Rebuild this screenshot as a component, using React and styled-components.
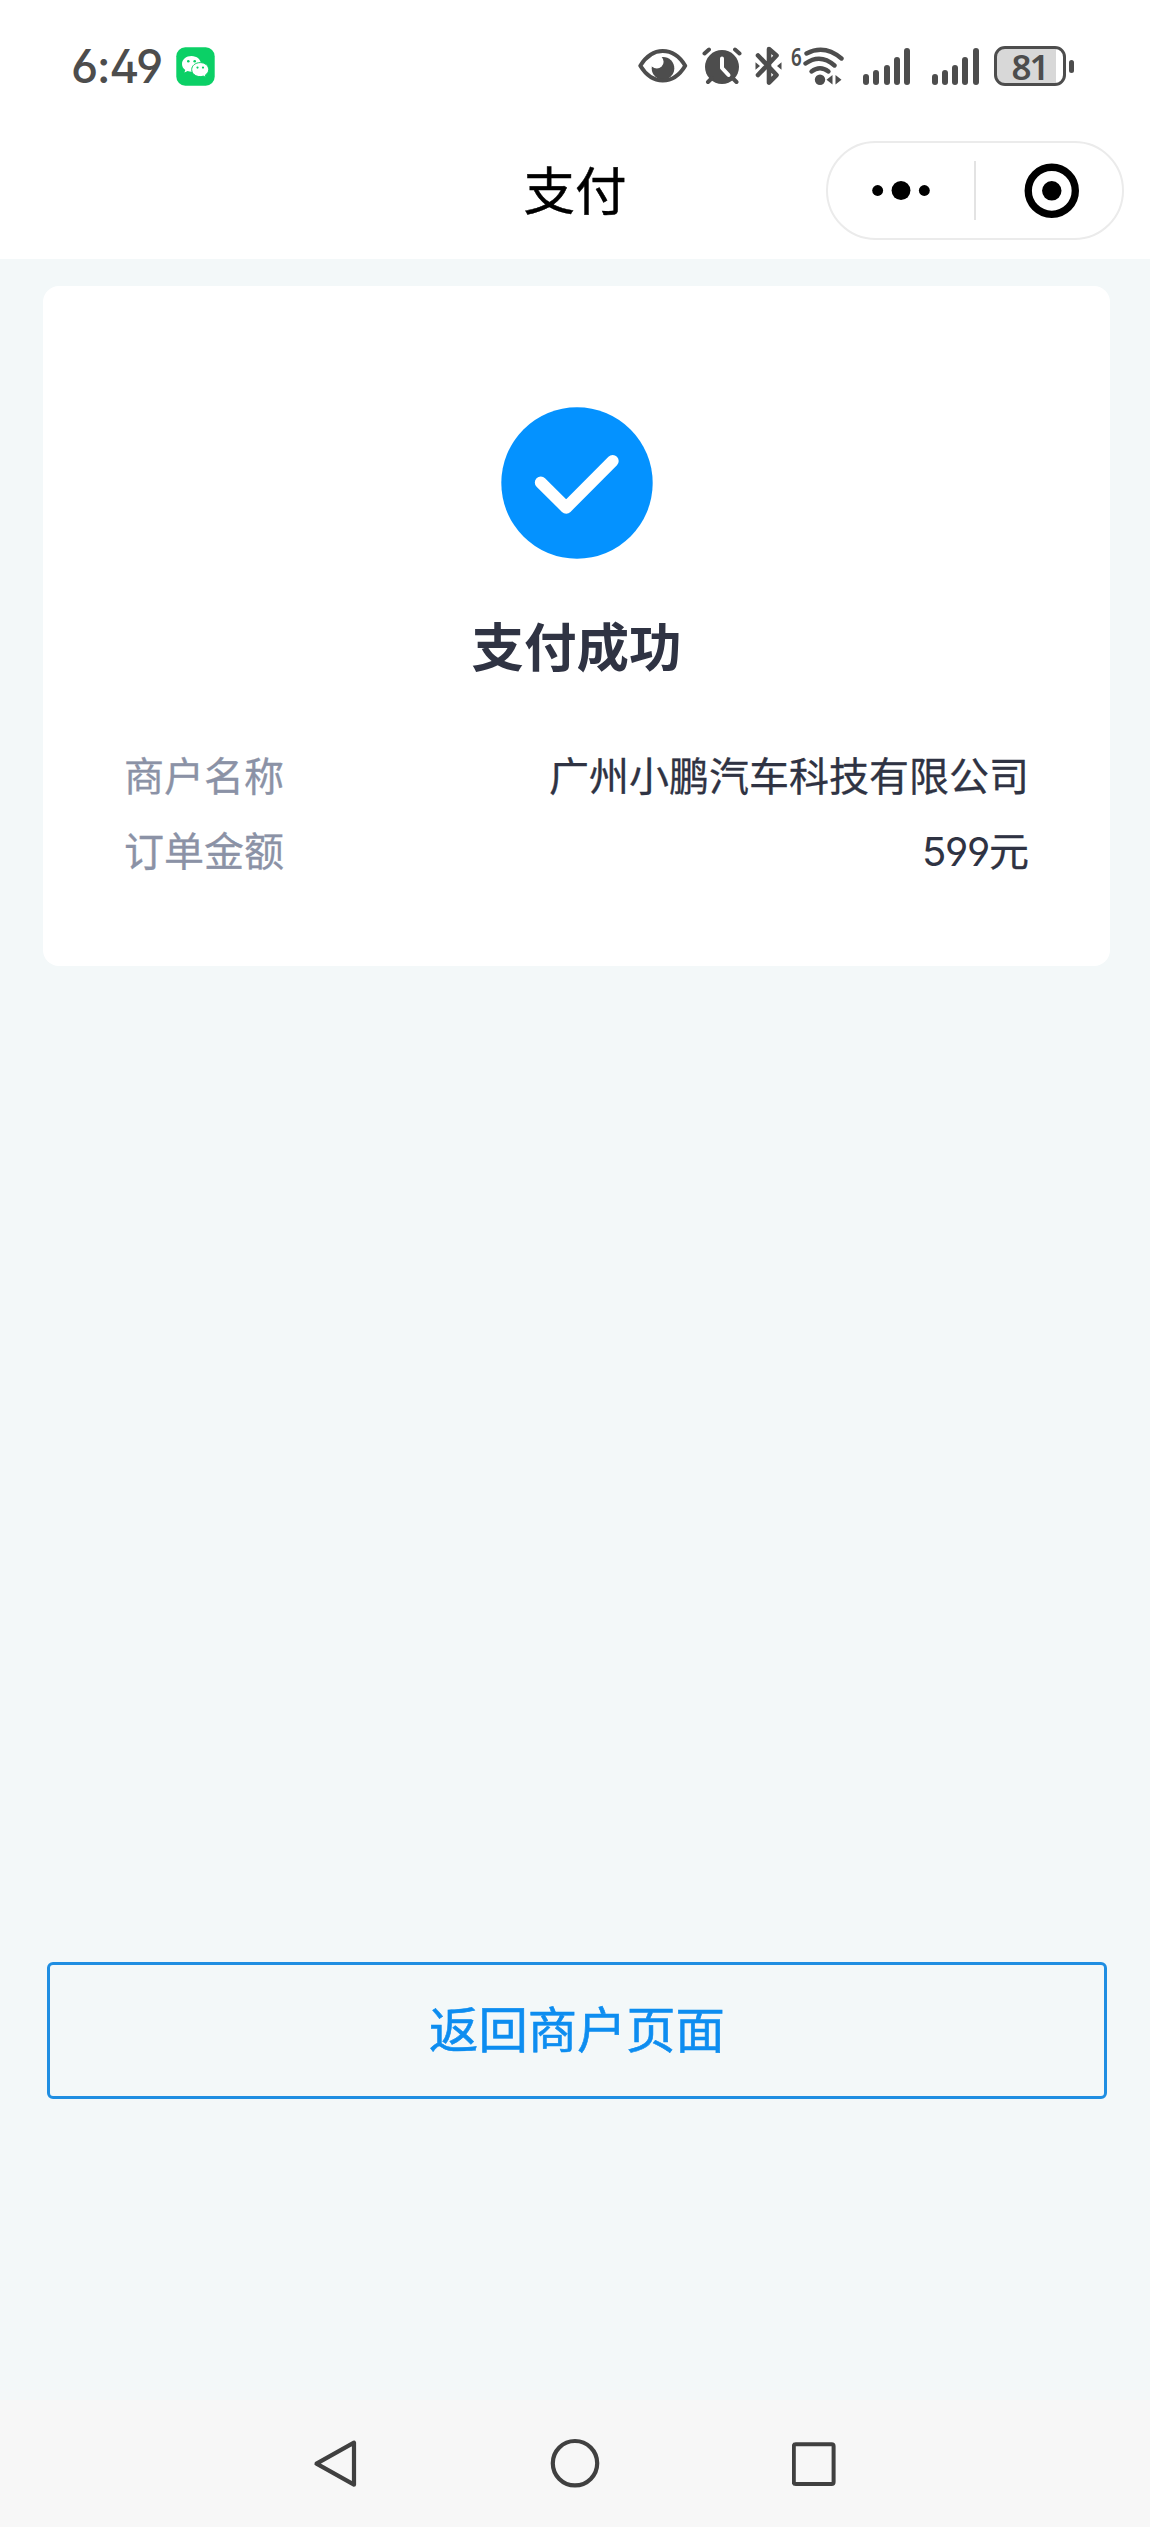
import React from 'react'
import styled, {createGlobalStyle} from 'styled-components'


const GlobalStyle = createGlobalStyle`
    body{
        margin: 0;
        background: #f3f8f9;
        font-family: 'Noto Sans CJK SC', sans-serif;
    }
    *{
        box-sizing: border-box;
    }
`;

const order = [
    {label: '商户名称', value: '广州小鹏汽车科技有限公司'},
    {label: '订单金额', amount: '599', value: '元'},
]

const bars = [11, 15, 20, 28, 37]

const WeChatIcon = () => (
    <Icon width="39" height="39" viewBox="0 0 39 39" $left={14}>
        <rect x="0.3" y="0.3" width="38.4" height="38.4" rx="9" fill="#0bd066"/>
        <path d="M15.5 9C10.200 9 6 12.500 6 17c0 2.500 1.300 4.500 3.300 6l-.9 2.600 3.200-1.500c1.200.4 2.500.7 3.900.7 5.300 0 9.500-3.400 9.500-7.800S20.800 9 15.500 9Z" fill="#fff"/>
        <path d="M24.200 15.600c-4.800 0-8.500 3.100-8.500 7s3.700 7 8.500 7c1.100 0 2.200-.2 3.100-.5l2.700 1.400-.7-2.400c2-1.300 3.400-3.300 3.400-5.500 0-3.900-3.700-7-8.500-7Z" fill="#fff" stroke="#0bd066" strokeWidth="1"/>
        <g fill="#0bd066">
            <circle cx="12.300" cy="14.200" r="1.300"/>
            <circle cx="18.700" cy="14.200" r="1.300"/>
            <circle cx="21.500" cy="20.600" r="1.100"/>
            <circle cx="27" cy="20.600" r="1.100"/>
        </g>
    </Icon>
)

const EyeIcon = () => (
    <Icon width="50" height="40" viewBox="638 46 50 40">
        <circle cx="663" cy="68.200" r="11.300" fill="#4d4d4d"/>
        <circle cx="656.800" cy="61.700" r="6.800" fill="#fff"/>
        <path d="M640.300 65.700C646 56.500 653 51 662.700 51s17 5.500 22.500 14.700C679.700 75 672.500 80.500 662.700 80.500S646 75 640.300 65.700Z" fill="none" stroke="#4d4d4d" strokeWidth="4" strokeLinejoin="round"/>
    </Icon>
)

const AlarmIcon = () => (
    <Icon width="40" height="40" viewBox="702 46 40 40" $left={14}>
        <circle cx="722" cy="67" r="17" fill="#4d4d4d"/>
        <g fill="none" stroke="#4d4d4d" strokeWidth="4" strokeLinecap="round">
            <path d="M704.500 53.500l4.500-4M739.500 53.500l-4.500-4M708 82l4-4M736.500 82l-4-4"/>
        </g>
        <path d="M722 58.500v9.500l6.500 7" fill="none" stroke="#fff" strokeWidth="4" strokeLinecap="round" strokeLinejoin="round"/>
    </Icon>
)

const BluetoothIcon = () => (
    <Icon width="28" height="40" viewBox="755 46 28 40" $left={13}>
        <path d="M758 55.500l18.500 19.500-7.500 7.500v-33.500l7.500 6.500-18.500 19.500" fill="none" stroke="#4d4d4d" strokeWidth="4.600" strokeLinejoin="round" strokeLinecap="round"/>
        <path d="M755.500 62.300l4.500 3.700-4.500 3.700ZM781.500 62.300l-4.500 3.700 4.500 3.700Z" fill="#4d4d4d"/>
    </Icon>
)

const WifiIcon = () => (
    <Icon width="42" height="40" viewBox="803 46 42 40">
        <g fill="none" stroke="#4d4d4d" strokeWidth="4.400" strokeLinecap="round">
            <path d="M806.500 53.500q18-9.500 35 5"/>
            <path d="M805.500 63.500q15-10.500 29 2" />
            <path d="M811.500 71.500q8.500-6.500 17 0"/>
        </g>
        <circle cx="820" cy="79.700" r="5.200" fill="#4d4d4d"/>
        <path d="M832.500 75v9.500l-6-4.700ZM835.500 75v9.500l6-4.700Z" fill="#4d4d4d"/>
    </Icon>
)

const CheckIcon = () => (
    <svg width="152" height="152" viewBox="0 0 152 152">
        <circle cx="76" cy="76" r="75.700" fill="#0492ff"/>
        <path d="M39.800 75.500l25.400 25.200 46.500-46.700" fill="none" stroke="#fff" strokeWidth="12" strokeLinecap="round" strokeLinejoin="round"/>
    </svg>
)

const Signal = ({left}) => (
    <SignalBars $left={left}>
        {bars.map(height => <Bar key={height} $height={height}/>)}
    </SignalBars>
)

const StatusBar = () => (
    <Status>
        <Time>6:49</Time>
        <WeChatIcon/>
        <StatusIcons>
            <EyeIcon/>
            <AlarmIcon/>
            <BluetoothIcon/>
            <WifiLevel>6</WifiLevel>
            <WifiIcon/>
            <Signal left={18}/>
            <Signal left={21.5}/>
            <Battery>81</Battery>
            <BatteryTip/>
        </StatusIcons>
    </Status>
)

const Header = () => (
    <TitleBar>
        <Title>支付</Title>
        <Capsule>
            <svg width="148" height="60" viewBox="827 161 148 60">
                <circle cx="877" cy="190.500" r="5.500"/>
                <circle cx="900.500" cy="190.500" r="9.500"/>
                <circle cx="924" cy="190.500" r="5.500"/>
            </svg>
            <Divider/>
            <svg width="147" height="60" viewBox="976 161 147 60">
                <circle cx="1052.300" cy="190.800" r="23.700" fill="none" stroke="#000" strokeWidth="7.400"/>
                <circle cx="1052.300" cy="190.800" r="9.800"/>
            </svg>
        </Capsule>
    </TitleBar>
)

const NavBar = () => (
    <Nav>
        <svg width="46" height="52" viewBox="0 0 46 52">
            <path d="M42 4.700v42L4.500 25.700Z" fill="none" stroke="#404040" strokeWidth="4.200" strokeLinejoin="round"/>
        </svg>
        <svg width="52" height="52" viewBox="0 0 52 52">
            <circle cx="26" cy="25.200" r="22.200" fill="none" stroke="#404040" strokeWidth="4.200"/>
        </svg>
        <svg width="46" height="52" viewBox="0 0 46 52">
            <rect x="1.800" y="6.300" width="39.800" height="39.800" rx="2" fill="none" stroke="#404040" strokeWidth="4"/>
        </svg>
    </Nav>
)

class App extends React.Component{
    render(){
        return (
            <Page>
                <GlobalStyle/>
                <StatusBar/>
                <Header/>
                <Content>
                    <Card>
                        <CheckIcon/>
                        <Result>支付成功</Result>
                        {order.map(({label, amount, value}) => (
                            <Row key={label}>
                                <Label>{label}</Label>
                                <Value>{amount && <Amount>{amount}</Amount>}{value}</Value>
                            </Row>
                        ))}
                    </Card>
                    <BackButton>返回商户页面</BackButton>
                </Content>
                <NavBar/>
            </Page>
        )
    }
}
export default App

const Page = styled.div`
    display: flex;
    flex-direction: column;
    width: 1150px;
    height: 2527px;
`;
const Status = styled.div`
    display: flex;
    align-items: center;
    height: 132px;
    padding: 0 76.5px 0 71px;
    background: #fff;
    color: #4d4d4d;
`;
const Time = styled.span`
    width: 91px;
    font: 500 46px/50px Inter, sans-serif;
    font-feature-settings: 'cv02', 'cv03', 'cv04';
    letter-spacing: -1.5px;
    white-space: nowrap;
`;
const Icon = styled.svg`
    flex: none;
    margin-left: ${({$left}) => $left || 0}px;
`;
const StatusIcons = styled.div`
    display: flex;
    align-items: center;
    margin-left: auto;
`;
const WifiLevel = styled.span`
    width: 12px;
    height: 42px;
    margin-left: 8px;
    font: 600 25px/22px 'Noto Sans', sans-serif;
    transform: scaleX(0.75);
    transform-origin: left;
`;
const SignalBars = styled.div`
    display: flex;
    align-items: flex-end;
    gap: 4.25px;
    height: 37px;
    margin-left: ${({$left}) => $left}px;
`;
const Bar = styled.i`
    width: 6px;
    height: ${({$height}) => $height}px;
    border-radius: 3px;
    background: #4d4d4d;
`;
const Battery = styled.div`
    width: 72px;
    height: 40px;
    margin-left: 15px;
    border: 3px solid #4d4d4d;
    border-radius: 11px;
    background: linear-gradient(90deg, #d8d8d8 59px, #fff 59px);
    font: 600 35px/35px 'Noto Sans', sans-serif;
    letter-spacing: -2px;
    text-align: center;
`;
const BatteryTip = styled.i`
    width: 5px;
    height: 13px;
    margin-left: 3px;
    border-radius: 2.5px;
    background: #4d4d4d;
`;
const TitleBar = styled.header`
    display: grid;
    grid-template-columns: 1fr auto 1fr;
    align-items: center;
    height: 127px;
    padding: 0 26px 10px 26px;
    background: #fff;
`;
const Title = styled.h1`
    grid-column: 2;
    margin: 0 0 5px;
    font-size: 51.500px;
    font-weight: 400;
    line-height: 60px;
    -webkit-text-stroke: 0.5px;
    color: #000;
`;
const Capsule = styled.div`
    display: flex;
    align-items: center;
    justify-self: end;
    width: 298px;
    height: 99px;
    border: 2px solid #ebebeb;
    border-radius: 50px;
`;
const Divider = styled.i`
    flex: none;
    width: 2px;
    height: 59px;
    background: #e3e3e3;
    margin-left: -1px;
`;
const Content = styled.main`
    display: flex;
    flex-direction: column;
    flex: 1;
    padding: 27px 40px 0 43px;
`;
const Card = styled.section`
    display: flex;
    flex-direction: column;
    align-items: center;
    height: 680px;
    padding: 121px 81px 0;
    border-radius: 16px;
    background: #fff;
`;
const Result = styled.h2`
    margin: 47px 0 62px;
    font-size: 52.500px;
    font-weight: 700;
    line-height: 76px;
    color: #2f3343;
`;
const Row = styled.div`
    display: flex;
    justify-content: space-between;
    width: 100%;
    height: 75px;
    font-size: 40px;
    line-height: 60px;
    -webkit-text-stroke: 0.3px;
`;
const Label = styled.span`
    color: #8b92a6;
`;
const Value = styled.span`
    color: #2f3343;
`;
const Amount = styled.span`
    font-family: Inter, sans-serif;
    font-feature-settings: 'cv04';
    letter-spacing: -1.3px;
    -webkit-text-stroke: 0;
`;
const BackButton = styled.button`
    width: 1060px;
    height: 137px;
    margin: 996px 0 0 4px;
    padding: 0 0 9px;
    border: 3px solid #1f8ee2;
    border-radius: 6px;
    background: transparent;
    font-family: inherit;
    font-size: 49.300px;
    -webkit-text-stroke: 0.6px;
    color: #0d8df0;
`;
const Nav = styled.nav`
    display: flex;
    justify-content: space-between;
    height: 127px;
    padding: 38px 312px 0;
    background: #f7f7f7;
`;
